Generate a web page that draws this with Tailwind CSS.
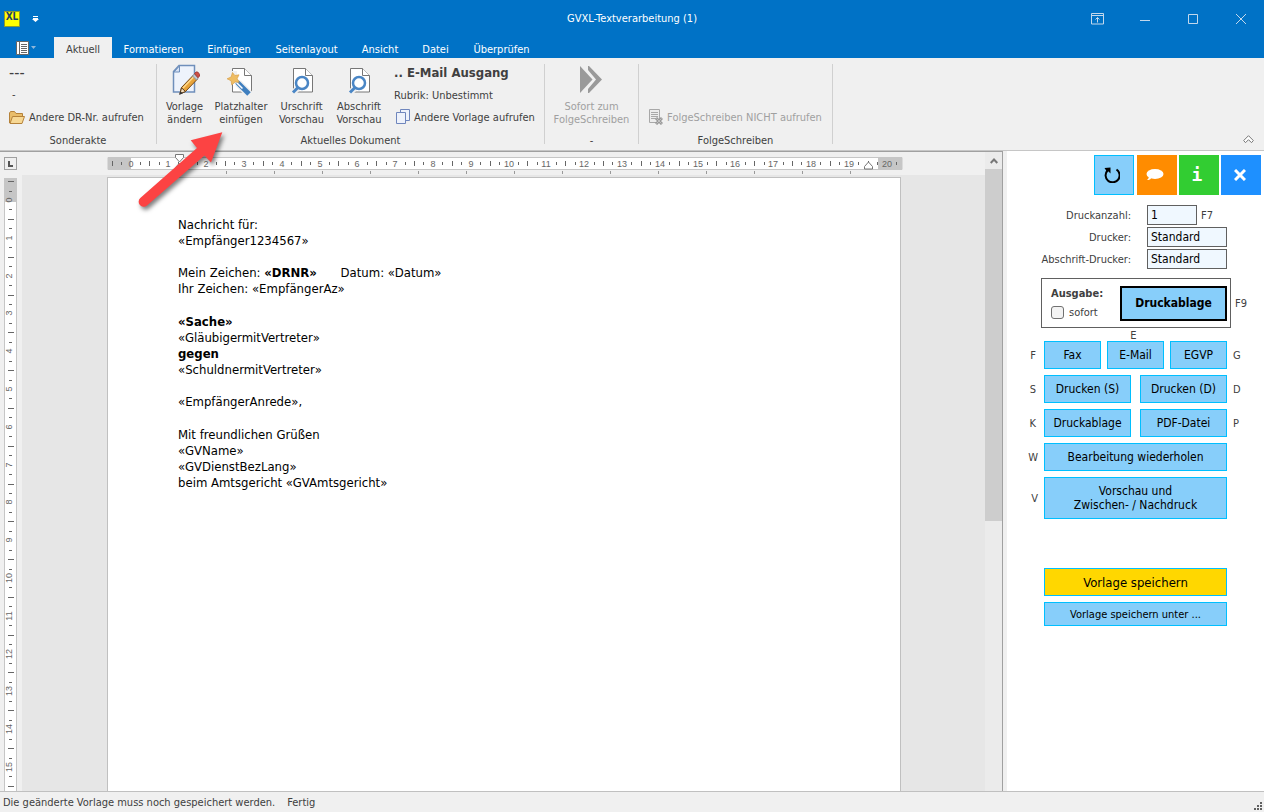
<!DOCTYPE html>
<html lang="de">
<head>
<meta charset="utf-8">
<title>GVXL-Textverarbeitung (1)</title>
<script src="https://cdn.jsdelivr.net/npm/@tailwindcss/browser@4"></script>
</head>
<body class="h-screen flex flex-col overflow-hidden bg-white text-[#404040] text-[11px] leading-[13px] font-['DejaVu_Sans_Condensed','DejaVu_Sans',sans-serif]">

<!-- Title bar -->
<header class="bg-[#0072c6] text-white shrink-0">
  <div class="h-[37px] relative flex items-center justify-between">
    <div class="flex items-center gap-3 pl-1">
      <div class="w-4 h-4 bg-[#ffff00] border border-[#8a9a30] text-[#1f3f66] text-[10px] leading-[10px] font-bold flex justify-center">XL</div>
      <button aria-label="Schnellzugriff anpassen"><svg class="block" width="7" height="6" viewBox="0 0 7 6" fill="#fff"><path d="M1 0h5v1H1zM1 2h5v1h1L3.500 6 0 3h1z"/></svg></button>
    </div>
    <h1 class="absolute inset-x-0 text-center px-4 pointer-events-none">GVXL-Textverarbeitung (1)</h1>
    <div class="flex items-center gap-9 pr-[18px] relative">
      <button aria-label="Menüband"><svg class="block" width="13" height="12" fill="none" stroke="#c3d8ec"><path d="M.5.500h12v10.500H.5zM.5 2.500h12M6.500 4.500v5M4.500 6.500l2-2 2 2"/></svg></button>
      <button aria-label="Minimieren"><svg class="block" width="10" height="10" stroke="#c3d8ec"><path d="M0 6.500h10"/></svg></button>
      <button aria-label="Maximieren" class="ml-0.5"><svg class="block" width="10" height="10" fill="none" stroke="#c3d8ec"><path d="M.5.500h9v9h-9z"/></svg></button>
      <button aria-label="Schließen" class="ml-0.5"><svg class="block" width="10" height="10" stroke="#c3d8ec"><path d="M0 0l10 10M10 0L0 10"/></svg></button>
    </div>
  </div>
  <nav class="h-[21px] flex">
    <button aria-label="Anwendungsmenü" class="w-[54px] pl-4 flex items-center gap-0.5">
      <svg width="13" height="14" viewBox="0 0 13 14"><path fill="#fff" stroke="#666" d="M.5.500h12v13H.5z"/><path stroke="#666" d="M3.500 1v12M5 3.500h6M5 5.500h6M5 7.500h6M5 9.500h6M5 11.500h6"/></svg>
      <svg width="5" height="3" fill="#8fb7da"><path d="M0 0h5L2.500 3z"/></svg>
    </button>
    <button class="w-[58px] bg-[#f0f0f0] text-[#404040] pt-[3px]">Aktuell</button>
    <button class="w-[83px] pt-[3px]">Formatieren</button>
    <button class="w-[68px] pt-[3px]">Einfügen</button>
    <button class="w-[87px] pt-[3px]">Seitenlayout</button>
    <button class="w-[60px] pt-[3px]">Ansicht</button>
    <button class="w-[51px] pt-[3px]">Datei</button>
    <button class="w-[81px] pt-[3px]">Überprüfen</button>
  </nav>
</header>

<!-- Ribbon -->
<section class="bg-[#f0f0f0] h-[93px] shrink-0 flex pt-1.5 border-b border-[#c6c6c6] relative">
  <div class="w-[157px] h-20 border-r border-[#d0d0d0] flex flex-col">
    <div class="px-[9px] flex-1 flex flex-col">
      <p class="h-[22px] pt-0.5 text-base leading-[13px]">---</p>
      <p class="h-[22px] pt-0.5 pl-[3px]">-</p>
      <button class="flex items-center gap-1 h-[18px] whitespace-nowrap">
        <svg width="16" height="13" viewBox="0 0 16 13"><path fill="#e9bd6a" stroke="#b5823a" d="M.5 12V2l1-1.500h4l1.500 2h6.500v3"/><path fill="#f7d894" stroke="#b5823a" d="M1 12.500L3.500 5.500h12L13 12.500z"/></svg>
        Andere DR-Nr. aufrufen</button>
    </div>
    <p class="text-center h-[10px] leading-[14px]">Sonderakte</p>
  </div>
  <div class="w-[388px] h-20 border-r border-[#d0d0d0] flex flex-col">
    <div class="flex-1 flex pl-[3px]">
      <button class="w-[49px] flex flex-col items-center">
        <svg class="mb-1 shrink-0" width="30" height="32" viewBox="0 0 30 32"><path fill="#eef3fc" stroke="#6f8fbb" stroke-width="1.500" d="M9 1.500h15.500v26.500h-21V7.500z"/><path fill="#d5e1f5" stroke="#6f8fbb" d="M9.500 2v6H4z"/><path fill="#e8a33a" stroke="#754918" d="M10 29.500l1.500-6L23.500 11l4 4L15.500 27.500z"/><path stroke="#ffd98b" stroke-width="1.500" d="M13 24L24 12.500"/><path fill="#f5dfc0" stroke="#5c3d1a" d="M10 29.800l1.500-6 4 3.700z"/><path fill="#333" d="M9 31l1.500-3.500 2.500 1.800z"/><path fill="#c3c9d1" stroke="#8d949e" d="M22.500 12l1.800-2 4 4-1.800 2z"/><path fill="#cf4e43" stroke="#a23b36" d="M24.500 9.500l1.700-1.500h1.500l2 2.500-.2 1.500-1.500 1.700z"/></svg>
        Vorlage<br>ändern</button>
      <button class="w-[64px] flex flex-col items-center">
        <svg class="mb-1 shrink-0" width="28" height="32" viewBox="0 0 28 32"><path fill="#fff" stroke="#777" d="M5.500 4.500h12l7 7v16.500h-19z"/><path fill="#fff" stroke="#777" d="M17.500 4.500v7h7"/><path fill="#f0f0f0" d="M4 7h6v13H4z"/><path stroke="#f0f0f0" stroke-width="8" d="M11 19l12 12"/><path stroke="#3f7fbf" stroke-width="5" d="M10 18l12 12"/><path stroke="#fff" stroke-width="1.500" d="M9.500 18.500l6 6"/><path fill="#efbd63" stroke="#d8a04a" stroke-width=".7" d="M5.500 8.500l2.300 3 4.200-.7-1.800 3.800 2 3.700-4.200-.3-3.200 3-.7-4.200-4-2 4-1.800z"/></svg>
        Platzhalter<br>einfügen</button>
      <button class="w-[57px] flex flex-col items-center">
        <svg class="mb-1 shrink-0" width="24" height="32" viewBox="0 0 24 32"><path fill="#fff" stroke="#777" d="M3.500 4.500h12l7 7v16.500h-19z"/><path fill="#fff" stroke="#777" d="M15.500 4.500v7h7"/><path stroke="#f0f0f0" stroke-width="6" d="M2 30l6-6"/><circle cx="12" cy="19" r="6" fill="#fff" stroke="#4a86c5" stroke-width="2.500"/><path stroke="#4a86c5" stroke-width="3" d="M3 28.500l5-5"/></svg>
        Urschrift<br>Vorschau</button>
      <button class="w-[58px] flex flex-col items-center">
        <svg class="mb-1 shrink-0" width="24" height="32" viewBox="0 0 24 32"><path fill="#fff" stroke="#777" d="M3.500 4.500h12l7 7v16.500h-19z"/><path fill="#fff" stroke="#777" d="M15.500 4.500v7h7"/><path stroke="#f0f0f0" stroke-width="6" d="M2 30l6-6"/><circle cx="12" cy="19" r="6" fill="#fff" stroke="#4a86c5" stroke-width="2.500"/><path stroke="#4a86c5" stroke-width="3" d="M3 28.500l5-5"/></svg>
        Abschrift<br>Vorschau</button>
      <div class="flex flex-col pl-[6px] whitespace-nowrap">
        <p class="h-[22px] pt-0.5 text-[13px] font-bold">.. E-Mail Ausgang</p>
        <p class="h-[22px] pt-[3px]">Rubrik: Unbestimmt</p>
        <button class="flex items-center gap-1 h-[18px] pl-0.5">
          <svg width="14" height="16" viewBox="0 0 14 16" fill="#eef2fb" stroke="#6f86bd"><path d="M4.500.500h9v11h-9z"/><path d="M.5 3.500h9v11h-9z"/></svg>
          Andere Vorlage aufrufen</button>
      </div>
    </div>
    <p class="text-center h-[10px] leading-[14px]">Aktuelles Dokument</p>
  </div>
  <div class="w-[94px] h-20 border-r border-[#d0d0d0] flex flex-col">
    <div class="flex-1 flex justify-center">
      <button disabled class="flex flex-col items-center text-[#a0a0a0]">
        <svg class="mb-1 shrink-0" width="22" height="32" viewBox="0 0 22 32" fill="#9a9a9a"><path d="M0 2l12.500 13.500L0 29z"/><path d="M8 2h1l13 13.500L9 29H8v-4l8-9.500L8 6z"/></svg>
        Sofort zum<br>FolgeSchreiben</button>
    </div>
    <p class="text-center h-[10px] leading-[14px]">-</p>
  </div>
  <div class="w-[194px] h-20 border-r border-[#d0d0d0] flex flex-col">
    <div class="flex-1 pt-11 flex justify-center">
      <button disabled class="flex items-center gap-1 h-[18px] text-[#a0a0a0] whitespace-nowrap">
        <svg width="14" height="16" viewBox="0 0 14 16"><path fill="#ececec" stroke="#a8a8a8" d="M.5.500h10v13H.5z"/><path stroke="#a8a8a8" d="M2 3.500h7M2 5.500h7M2 7.500h7M2 9.500h5"/><path stroke="#999" stroke-width="3" d="M7 9l6 6M13 9l-6 6"/><path stroke="#ccc" stroke-width=".8" d="M7.500 9.500l5 5M12.500 9.500l-5 5"/></svg>
        FolgeSchreiben NICHT aufrufen</button>
    </div>
    <p class="text-center h-[10px] leading-[14px]">FolgeSchreiben</p>
  </div>
  <button aria-label="Menüband reduzieren" class="ml-auto self-end mr-2.5 mb-1.5"><svg class="block" width="11" height="9" viewBox="0 0 11 9" fill="#fff" stroke="#777"><path d="M5.500.700L10.300 5.500 8.500 7.700 5.500 4.700 2.500 7.700.7 5.500z"/></svg></button>
</section>

<main class="flex-1 min-h-0 flex">
  <!-- Editor -->
  <section class="flex-1 min-w-0 flex border-t border-r border-[#a0a0a0] bg-[#f0f0f0]">
    <div class="w-[22px] shrink-0 pl-1 flex flex-col overflow-hidden">
      <button aria-label="Tabulator" class="mt-[5px] mb-2 w-[13px] h-[13px] shrink-0 bg-[#f0f0f0] border border-[#a0a0a0] flex items-center justify-center"><svg width="5" height="6" fill="#555"><path d="M0 0h2v4h3v2H0z"/></svg></button>
      <svg id="vruler" class="flex-1 min-h-0 block" width="13" font-size="9" fill="#666"></svg>
    </div>
    <div class="flex-1 min-w-0 flex flex-col overflow-hidden">
      <div class="h-[23px] shrink-0 pt-[5px] pl-[86px]">
        <svg id="hruler" class="block overflow-visible" width="794" height="18" font-size="9" fill="#666"></svg>
      </div>
      <div class="flex-1 min-h-0 bg-[#e6e6e6] pt-0.5 pl-[85px] overflow-hidden">
        <article class="w-[794px] h-[1123px] bg-white border border-[#c0c0c0] pt-[39px] pl-[70px] text-[13px] leading-4 text-black">
          <p class="mb-4">Nachricht für:<br>«Empfänger1234567»</p>
          <p class="mb-[17px]">Mein Zeichen: <b>«DRNR»</b> <span class="ml-5">Datum: «Datum»</span><br>Ihr Zeichen: «EmpfängerAz»</p>
          <p class="mb-4"><b>«Sache»</b><br>«GläubigermitVertreter»<br><b>gegen</b><br>«SchuldnermitVertreter»</p>
          <p class="mb-[17px]">«EmpfängerAnrede»,</p>
          <p>Mit freundlichen Grüßen<br>«GVName»<br>«GVDienstBezLang»<br>beim Amtsgericht «GVAmtsgericht»</p>
        </article>
      </div>
    </div>
    <div class="w-[17px] shrink-0 bg-[#ebebeb] flex flex-col">
      <button aria-label="Nach oben" class="h-[17px] bg-[#ebebeb] flex items-center justify-center"><svg width="8" height="6" fill="none" stroke="#777" stroke-width="2"><path d="M.7 5L4 1.500 7.300 5"/></svg></button>
      <div class="h-[352px] bg-[#cdcdcd]"></div>
    </div>
  </section>
  <div class="w-1 shrink-0 bg-[#f0f0f0]"></div>

  <!-- Output panel -->
  <aside class="w-[257px] shrink-0 pt-1">
    <div class="flex justify-end gap-0.5 pr-[3px]">
      <button aria-label="Aktualisieren" class="w-10 h-10 mr-px bg-[#87cefa] border border-[#00bfff] flex items-center justify-center"><svg class="mr-1" width="16" height="16" viewBox="0 0 16 16" fill="none" stroke="#000" stroke-width="2"><path d="M12.500 2.500A7 7 0 1 1 3.500 3.500"/><path stroke="none" fill="#000" d="M.5 1L6.500.500V6.500L4.500 4.500 2.500 4z"/></svg></button>
      <button aria-label="Nachricht" class="w-10 h-10 bg-[#ff8c00] flex items-center justify-center"><svg class="mr-1" width="18" height="12" viewBox="0 0 18 12" fill="#fff"><ellipse cx="9" cy="5" rx="8.500" ry="5"/><path d="M3 7l2 2c0 1.500-2 2-4 2 1-.8 2-2 2-4z"/></svg></button>
      <button aria-label="Information" class="w-10 h-10 bg-[#32cd32] text-white font-bold text-lg leading-4 pr-1 font-['DejaVu_Sans_Mono',monospace]">i</button>
      <button aria-label="Schließen" class="w-10 h-10 bg-[#1e90ff] flex items-center justify-center"><svg class="mr-0.5" width="12" height="12" stroke="#fff" stroke-width="3"><path d="M1 1l10 10M11 1L1 11"/></svg></button>
    </div>
    <form class="mt-2.5 flex flex-col gap-0.5">
      <div class="flex items-center h-5"><label for="anz" class="w-[124px] text-right mr-4">Druckanzahl:</label><input id="anz" value="1" class="w-[50px] h-5 px-[3px] border border-[#606060] bg-[#f0f8ff] text-black text-xs"><span class="ml-1">F7</span></div>
      <div class="flex items-center h-5"><label for="drk" class="w-[124px] text-right mr-4">Drucker:</label><input id="drk" value="Standard" class="w-20 h-5 px-[3px] border border-[#606060] bg-[#f0f8ff] text-black text-xs"></div>
      <div class="flex items-center h-5"><label for="abs" class="w-[124px] text-right mr-4">Abschrift-Drucker:</label><input id="abs" value="Standard" class="w-20 h-5 px-[3px] border border-[#606060] bg-[#f0f8ff] text-black text-xs"></div>
    </form>
    <div class="mt-[9px] ml-[34px] flex items-center gap-1">
      <div class="w-[190px] h-[50px] border border-[#606060] flex items-center justify-between pl-[9px] pr-[3px]">
        <div class="flex flex-col gap-1.5">
          <b>Ausgabe:</b>
          <label class="flex items-center gap-[5px]"><input type="checkbox" class="appearance-none w-[13px] h-[13px] rounded-[3px] border border-[#707070] bg-[#f3f3f3]">sofort</label>
        </div>
        <button class="w-[107px] h-[35px] bg-[#87cefa] border-2 border-black text-black text-xs font-bold">Druckablage</button>
      </div>
      <span>F9</span>
    </div>
    <div class="w-[179px] ml-[37px] h-[13px] text-center leading-[15px]">E</div>
    <div class="grid grid-cols-[31px_183px_auto] gap-x-1.5 gap-y-1.5 items-center text-xs leading-[14px] text-black">
      <span class="text-[11px] text-right pt-0.5 pr-0.5 text-[#404040]">F</span>
      <div class="grid grid-cols-3 gap-1.5"><button class="h-7 bg-[#87cefa] border border-[#00bfff]">Fax</button><button class="h-7 bg-[#87cefa] border border-[#00bfff]">E-Mail</button><button class="h-7 bg-[#87cefa] border border-[#00bfff]">EGVP</button></div>
      <span class="text-[11px] pt-0.5 text-[#404040]">G</span>
      <span class="text-[11px] text-right pt-0.5 pr-0.5 text-[#404040]">S</span>
      <div class="grid grid-cols-2 gap-[9px]"><button class="h-7 bg-[#87cefa] border border-[#00bfff]">Drucken (S)</button><button class="h-7 bg-[#87cefa] border border-[#00bfff]">Drucken (D)</button></div>
      <span class="text-[11px] pt-0.5 text-[#404040]">D</span>
      <span class="text-[11px] text-right pt-0.5 pr-0.5 text-[#404040]">K</span>
      <div class="grid grid-cols-2 gap-[9px]"><button class="h-7 bg-[#87cefa] border border-[#00bfff]">Druckablage</button><button class="h-7 bg-[#87cefa] border border-[#00bfff]">PDF-Datei</button></div>
      <span class="text-[11px] pt-0.5 text-[#404040]">P</span>
      <span class="text-[11px] text-right pt-0.5 text-[#404040]">W</span>
      <button class="h-7 bg-[#87cefa] border border-[#00bfff]">Bearbeitung wiederholen</button><span></span>
      <span class="text-[11px] text-right pt-0.5 text-[#404040]">V</span>
      <button class="h-[42px] bg-[#87cefa] border border-[#00bfff]">Vorschau und<br>Zwischen- / Nachdruck</button><span></span>
    </div>
    <div class="w-[183px] ml-[37px] mt-[49px] flex flex-col gap-1.5 text-black">
      <button class="h-7 bg-[#ffd700] border border-[#00bfff] text-[13px]">Vorlage speichern</button>
      <button class="h-6 bg-[#87cefa] border border-[#00bfff]">Vorlage speichern unter ...</button>
    </div>
  </aside>
</main>

<!-- Status bar -->
<footer class="h-[21px] shrink-0 bg-[#f0f0f0] border-t border-[#c0c0c0] flex items-center gap-3 pl-[3px]">
  <span>Die geänderte Vorlage muss noch gespeichert werden.</span><span>Fertig</span>
  <svg class="ml-auto mr-0.5 self-end mb-0.5" width="8" height="8" fill="#606060"><path d="M6 0h2v2H6zM3 3h2v2H3zM6 3h2v2H6zM0 6h2v2H0zM3 6h2v2H3zM6 6h2v2H6z"/></svg>
</footer>

<!-- Callout arrow -->
<svg class="absolute left-[130px] top-[125px] pointer-events-none drop-shadow-[2px_3px_2px_rgba(0,0,0,0.5)]" width="100" height="90" viewBox="130 125 100 90" fill="#fc4343"><path d="M222.300 132.300L211 162.500 204.500 155.500 147 205.500A5 5 0 0 1 140.300 198L197 148 190.700 140.300z"/></svg>

<script>
const CM = 37.8, GREY = '#c6c6c6';
// Horizontal ruler: origin 22px from its left edge
let h = `<path fill="#fff" stroke="${GREY}" d="M0 .500h794v12H0z"/><path fill="${GREY}" d="M0 0h23v13H0zM770 0h24v13h-24z"/>`;
for (let q = -2; q <= 81; q++) {
  const x = Math.round(22.500 + q * CM / 4);
  if (q % 4 === 0) h += `<text x="${x}" y="10" text-anchor="middle" font-family="Liberation Sans">${q / 4}</text>`;
  else if (q % 2 === 0) h += `<path d="M${x} 4h1v5h-1z"/>`;
  else h += `<path d="M${x} 5h1v3h-1z"/>`;
}
for (let x = 70; x < 740; x += 48) h += `<path fill="#999" d="M${x + 48} 14h1v3h-1z"/>`;
h += '<path fill="#fff" stroke="#777" d="M67.500-2.500h8v3L71.500 5l-4-4.500zM71.500 6l4 4.500v2.500h-8v-2.500z"/><path fill="#fff" stroke="#777" d="M760.500 5l4 4.500v2.500h-8V9.500z"/>';
document.getElementById('hruler').innerHTML = h;
// Vertical ruler: origin 22px below its top edge, drawn for the visible 15.5 cm
let v = `<path fill="#fff" stroke="${GREY}" d="M.5 0h12v1000H.5z"/><path fill="${GREY}" d="M0 0h13v24H0z"/>`;
for (let q = -2; q <= 62; q++) {
  const y = Math.round(22 + q * CM / 4);
  if (q % 4 === 0) v += `<text transform="translate(8 ${y}) rotate(-90)" text-anchor="middle" font-family="Liberation Sans">${q / 4}</text>`;
  else if (q % 2 === 0) v += `<path d="M4 ${y}h6v1H4z"/>`;
  else v += `<path d="M5 ${y}h3v1H5z"/>`;
}
document.getElementById('vruler').innerHTML = v;
</script>
</body>
</html>
